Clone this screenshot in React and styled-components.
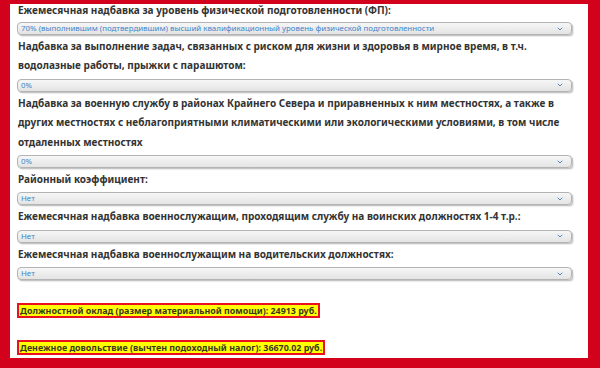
import React from 'react'
import styled, { createGlobalStyle } from 'styled-components'
import { ChevronDown } from 'lucide-react'

const Global = createGlobalStyle`
    html, body{
        margin:0;
        padding:0;
        background:#d2021c;
    }
    *{ box-sizing:border-box; }
`

const Frame = styled.div`
    width:600px;
    height:368px;
    background:#d2021c;
    padding:4px 12px 10px 10px;
`
const Panel = styled.div`
    height:100%;
    background:#fefffe;
    overflow:hidden;
`
const Content = styled.div`
    padding:0 16px 0 7px;
    font-family:"Noto Sans", "Open Sans", sans-serif;
`
const Label = styled.div`
    font-size:10px;
    font-weight:700;
    line-height:${p => p.$tight ? '12px' : '19.4px'};
    padding-bottom:${p => p.$tight ? '3px' : '0'};
    color:#333333;
    padding-left:1px;
    white-space:nowrap;
`
const SelectBox = styled.div`
    display:flex;
    align-items:center;
    justify-content:space-between;
    margin:3px 0 2px;
    height:13px;
    padding:0 7px 0 3px;
    border:1px solid #b4b4b4;
    border-radius:4px;
    background:linear-gradient(#f6f6f6, #e4e4e4);
    box-shadow:1px 1px 0 #c4c4c4, 2px 2px 1px rgba(0,0,0,0.08);
    color:#4186cb;
    font-size:7.9px;
    line-height:11px;
    white-space:nowrap;
    cursor:pointer;
`
const Chevron = styled.span`
    display:flex;
    color:#5d86b0;
`
const Results = styled.div`
    display:flex;
    flex-direction:column;
    align-items:flex-start;
    gap:22px;
    margin-top:23px;
`
const Result = styled.div`
    background:#ffff00;
    border:2px solid #e9101f;
    height:15px;
    padding:0 1px;
    font-size:8.9px;
    font-weight:700;
    line-height:11px;
    color:#3a3a1a;
    white-space:nowrap;
`

const fields = [
    {
        label: ['Ежемесячная надбавка за уровень физической подготовленности (ФП):'],
        value: '70% (выполнившим (подтвердившим) высший квалификационный уровень физической подготовленности'
    },
    {
        label: [
            'Надбавка за выполнение задач, связанных с риском для жизни и здоровья в мирное время, в т.ч.',
            'водолазные работы, прыжки с парашютом:'
        ],
        value: '0%'
    },
    {
        label: [
            'Надбавка за военную службу в районах Крайнего Севера и приравненных к ним местностях, а также в',
            'других местностях с неблагоприятными климатическими или экологическими условиями, в том числе',
            'отдаленных местностях'
        ],
        value: '0%'
    },
    { label: ['Районный коэффициент:'], value: 'Нет' },
    { label: ['Ежемесячная надбавка военнослужащим, проходящим службу на воинских должностях 1-4 т.р.:'], value: 'Нет' },
    { label: ['Ежемесячная надбавка военнослужащим на водительских должностях:'], value: 'Нет' }
]

const Field = ({ label, value, first }) => (
    <>
        <Label $tight={first}>
            {label.map((line, i) => <div key={i}>{line}</div>)}
        </Label>
        <SelectBox role="combobox">
            <span>{value}</span>
            <Chevron><ChevronDown size={8} strokeWidth={3} /></Chevron>
        </SelectBox>
    </>
)

export default function App() {
    return (
        <>
            <Global />
            <Frame>
                <Panel>
                    <Content>
                        {fields.map((f, i) => <Field key={i} first={i === 0} {...f} />)}
                        <Results>
                            <Result>Должностной оклад (размер материальной помощи): 24913 руб.</Result>
                            <Result>Денежное довольствие (вычтен подоходный налог): 36670.02 руб.</Result>
                        </Results>
                    </Content>
                </Panel>
            </Frame>
        </>
    )
}
